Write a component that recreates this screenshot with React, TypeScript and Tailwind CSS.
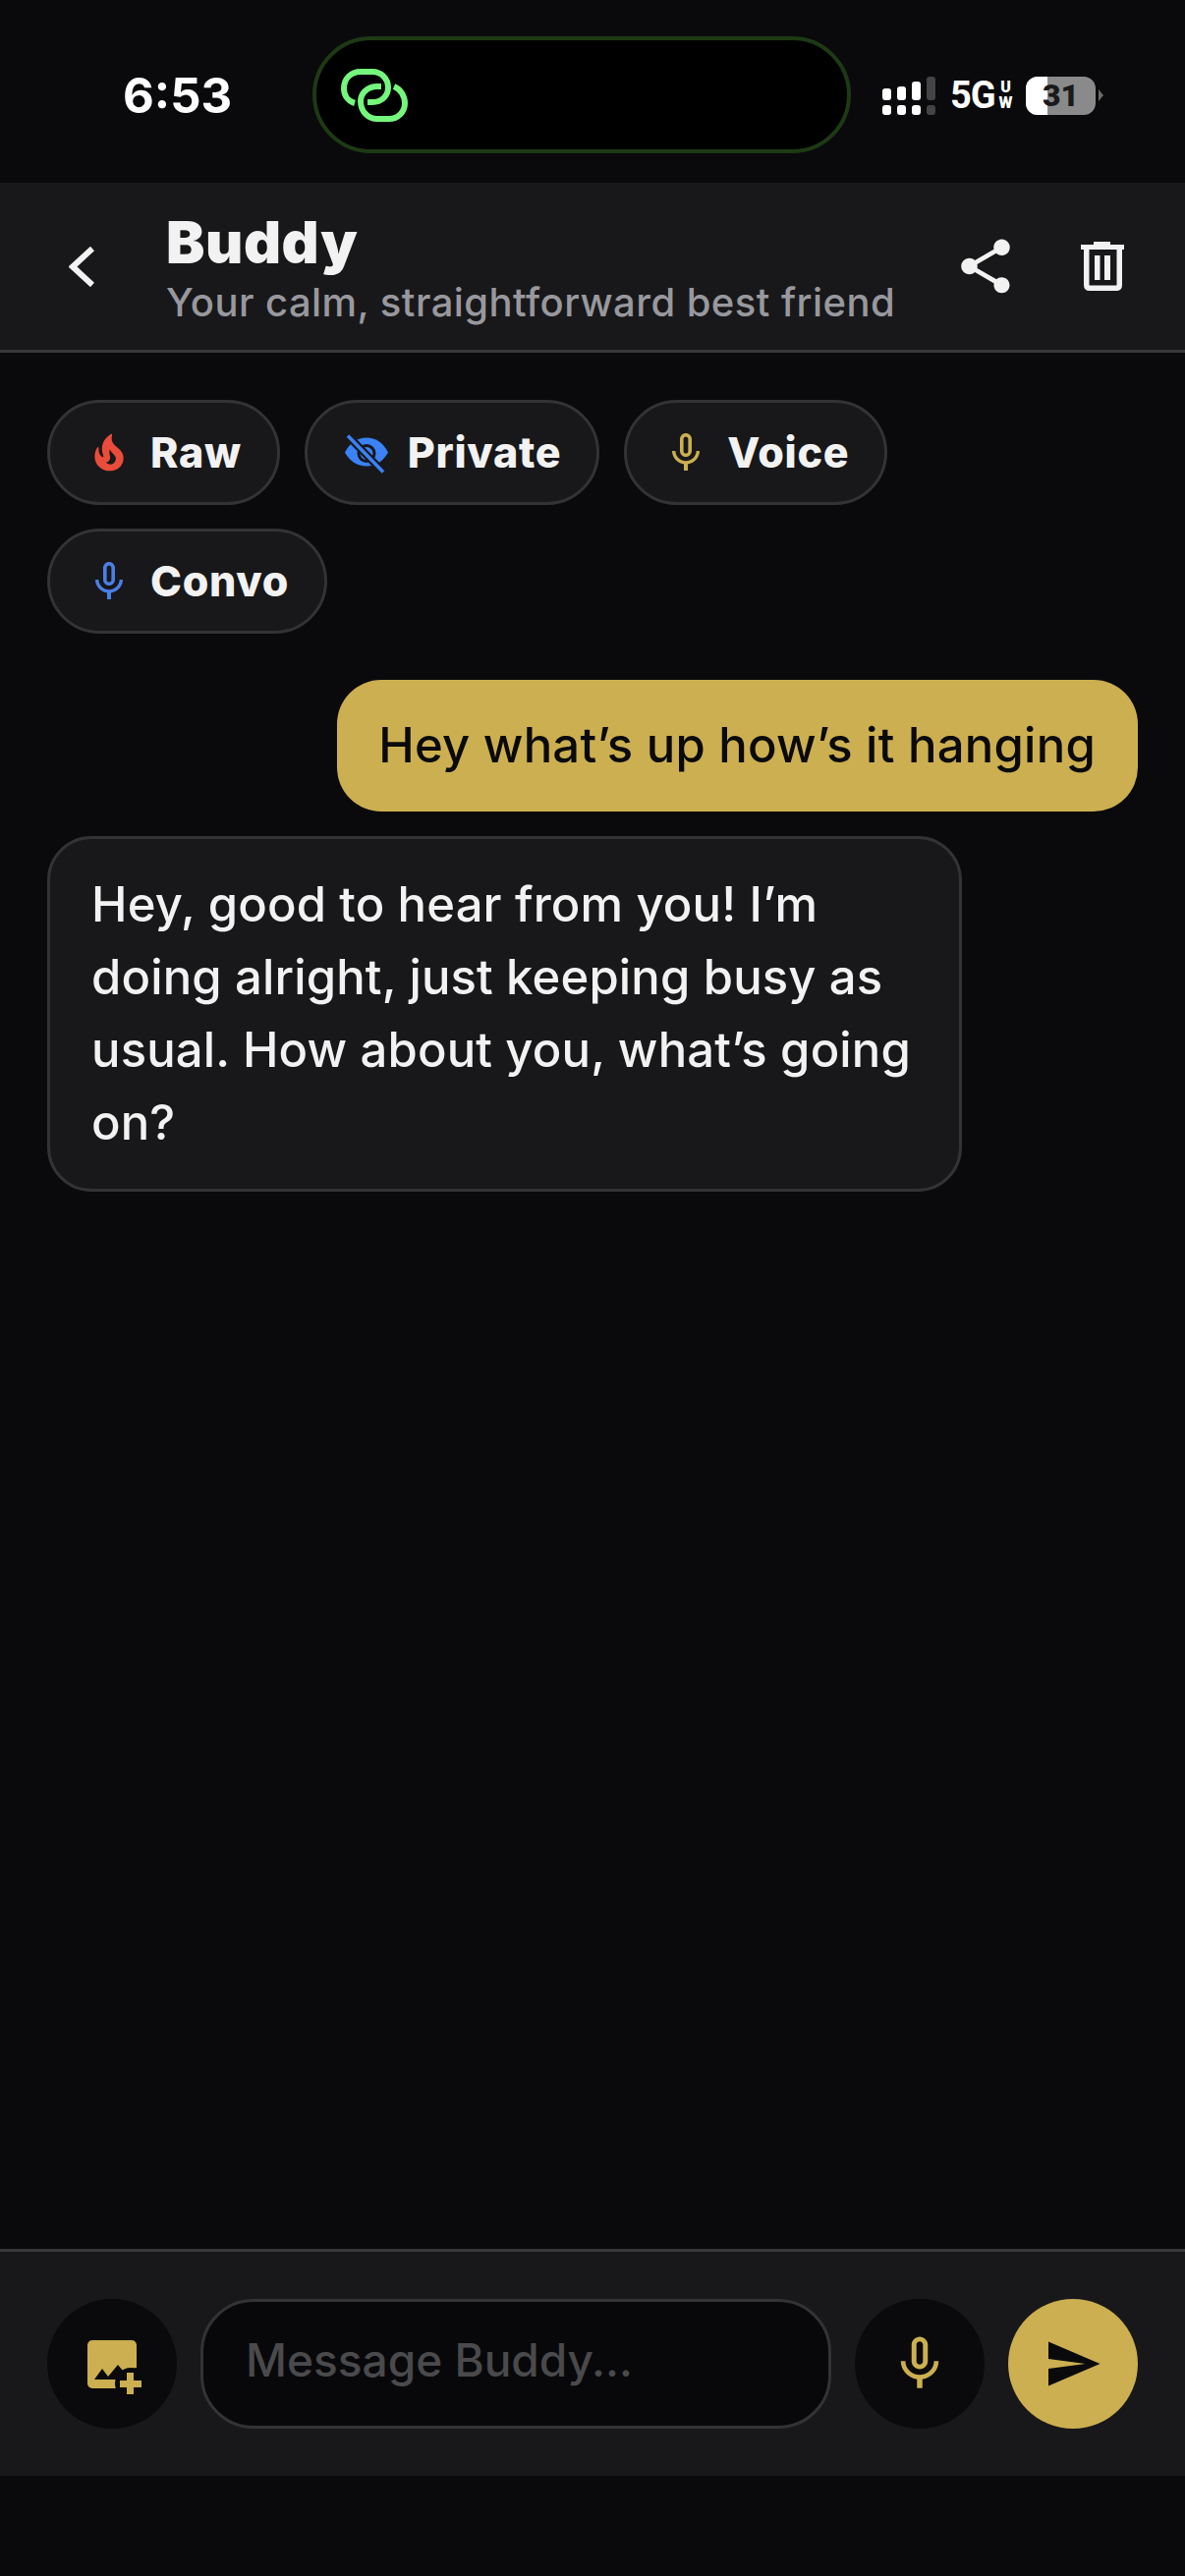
import { MdMicNone, MdSend, MdShare } from "react-icons/md";

const Bars = ({ top, dim }: { top: string; dim?: boolean }) => {
  const tone = dim ? "bg-[#444446]" : "bg-white";
  return (
    <div className="w-[9px] flex flex-col gap-[5px]">
      <div className={`${top} rounded-[3px] ${tone}`} />
      <div className={`h-[10px] rounded-[3px] ${tone}`} />
    </div>
  );
};

const StatusBar = () => {
  return (
    <div className="h-[186px] shrink-0 flex items-center pt-[8px]">
      <div className="ml-[125px] w-[193px]">
        <span className="text-[49px] leading-none font-bold text-white">6:53</span>
      </div>
      <div className="w-[548px] h-[119px] -mt-[1px] rounded-[60px] bg-black border-[4px] border-[#1d3a14] flex items-center pl-[25px]">
        <svg width="68" height="54" viewBox="0 0 68 54" fill="none" stroke="#74f77c" strokeWidth="6" strokeLinejoin="round">
          <path d="M14 35 C7 33 3 27 3 20 C3 10 10 3 20 3 L32 3 C41 3 48 10 48 19 C48 28 41 34 32 34 L27 34" />
          <path d="M41 18 L37 18 C27 18 20 25 20 33 C20 44 28 51 37 51 L49 51 C58 51 65 44 65 35 C65 28 61 21 54 18" />
        </svg>
      </div>
      <div className="ml-[32px] flex items-center">
        <div className="flex gap-[6px] items-end h-[39px]">
          <Bars top="h-[12px]" />
          <Bars top="h-[14px]" />
          <Bars top="h-[19px]" />
          <Bars top="h-[24px]" dim />
        </div>
        <div className="ml-[15px] w-[42px] font-['Roboto',sans-serif] text-[38px] leading-none font-bold text-white tracking-[-1px] whitespace-nowrap">
          5G
        </div>
        <div className="ml-[7px] w-[15px] flex flex-col items-center font-['Roboto',sans-serif] text-[16px] leading-[16px] font-black text-white">
          <span>U</span>
          <span>W</span>
        </div>
        <div className="ml-[13px] w-[71px] h-[39px] rounded-[12px] bg-[#8a8a8a] overflow-hidden relative flex items-center justify-center">
          <div className="absolute left-0 top-0 bottom-0 w-[22px] bg-white" />
          <span className="relative font-['Roboto',sans-serif] text-[32px] leading-none font-black text-[#1a1a1c]">31</span>
        </div>
        <div className="ml-[3px] w-0 h-0 border-y-[6px] border-y-transparent border-l-[5px] border-l-[#6a6a6a]" />
      </div>
    </div>
  );
};

const Header = () => {
  return (
    <header className="h-[173px] shrink-0 bg-[#18181a] border-b-[3px] border-[#38383a] flex items-center pl-[70px] pr-[62px]">
      <svg width="26" height="41" viewBox="0 0 26 41" fill="none" stroke="#f2f2f2" strokeWidth="6" className="shrink-0">
        <path d="M24 2 L4 20.5 L24 39" />
      </svg>
      <div className="ml-[73px] mt-[6px] flex-1 flex flex-col">
        <h1 className="text-[59px] leading-[62px] font-black tracking-[0.6px] text-[#f2f2f2]">Buddy</h1>
        <p className="mt-[6px] text-[40px] leading-[48px] font-medium tracking-[0.45px] text-[#98989e]">Your calm, straightforward best friend</p>
      </div>
      <MdShare className="text-[#f2f2f2] mr-[64px] shrink-0" size={66} />
      <svg width="44" height="50" viewBox="0 0 44 50" fill="none" className="shrink-0">
        <path d="M13 0 H30 V3 H44 V8 H0 V3 H13 Z" fill="#f2f2f2" />
        <path d="M5.750 8 V44 Q5.750 47.250 9 47.250 H36 Q39.250 47.250 39.250 44 V8" stroke="#f2f2f2" strokeWidth="5.500" />
        <rect x="14" y="14" width="5.500" height="25" fill="#f2f2f2" />
        <rect x="24" y="14" width="6" height="25" fill="#f2f2f2" />
      </svg>
    </header>
  );
};

const Flame = () => (
  <svg width="44" height="44" viewBox="0 0 24 24" fill="#ea4c3b" className="mx-[2px] shrink-0">
    <path d="M19.48 12.35c-1.57-4.08-7.16-4.3-5.81-10.23.1-.44-.37-.78-.75-.55C9.29 3.71 6.68 8 8.87 13.62c.18.46-.36.89-.75.59-1.81-1.37-2-3.34-1.84-4.75.06-.52-.62-.77-.91-.34C4.69 10.16 4 11.84 4 14.37c.38 5.6 5.11 7.32 6.81 7.54 2.43.31 5.06-.14 6.95-1.87 2.08-1.93 2.84-5.01 1.72-7.69zm-9.28 5.03c1.44-.35 2.18-1.39 2.38-2.31.33-1.43-.96-2.83-.09-5.09.33 1.87 3.27 3.04 3.27 5.08.08 2.53-2.66 4.7-5.56 2.32z" />
  </svg>
);

const EyeOff = () => (
  <svg width="48" height="48" viewBox="9 6.500 48 48" fill="none" className="shrink-0">
    <path d="M11 30 C16 20 24 15 33 15 C42 15 50 20 55 30 C50 39 42 44 33 44 C24 44 16 39 11 30 Z" fill="#3b82f6" />
    <circle cx="33" cy="31" r="8" stroke="#18181a" strokeWidth="3" />
    <path d="M14 13 L50 50" stroke="#18181a" strokeWidth="8" />
    <path d="M14 13 L50 50" stroke="#3b82f6" strokeWidth="3.500" />
  </svg>
);

const Chip = ({ icon, label }: { icon: React.ReactNode; label: string }) => {
  return (
    <div className="h-[107px] flex items-center gap-[18px] px-[36px] rounded-full bg-[#18181a] border-[3px] border-[#333336]">
      {icon}
      <span className="text-[43px] leading-none font-extrabold tracking-[0.7px] text-[#f2f2f2]">{label}</span>
    </div>
  );
};

const Composer = () => {
  return (
    <div className="h-[231px] shrink-0 bg-[#18181a] border-t-[3px] border-[#38383a] flex items-center gap-[24px] px-[48px]">
      <div className="w-[132px] h-[132px] rounded-full bg-[#0a0a0c] flex items-center justify-center shrink-0">
        <svg width="55" height="55" viewBox="0 0 55 55" className="ml-[5px] mt-[7px]">
          <rect x="0" y="0" width="50" height="49" rx="5" fill="#ccaf50" />
          <path d="M7 40 L15 29 L21 37 L31 25 L36 31 L50 28 V49 H30 V40 Z" fill="#0a0a0c" />
          <circle cx="44" cy="44" r="16" fill="#0a0a0c" />
          <path d="M40 33 H47 V41 H55 V48 H47 V55 H40 V48 H33 V41 H40 Z" fill="#ccaf50" />
        </svg>
      </div>
      <div className="flex-1 h-[132px] rounded-[54px] bg-[#08080a] border-[3px] border-[#333336] flex items-center pl-[43px]">
        <span className="text-[46px] leading-none font-medium text-[#4a4a4c] -mt-[8px]">Message Buddy...</span>
      </div>
      <div className="w-[132px] h-[132px] rounded-full bg-[#0a0a0c] flex items-center justify-center shrink-0">
        <MdMicNone className="text-[#ccaf50]" size={66} />
      </div>
      <div className="w-[132px] h-[132px] rounded-full bg-[#ccaf50] flex items-center justify-center shrink-0">
        <MdSend className="text-[#0a0a0c]" size={60} />
      </div>
    </div>
  );
};

export default function App() {
  return (
    <div className="font-['Inter','Noto_Sans',sans-serif] w-[1206px] h-[2622px] bg-[#0a0a0c] flex flex-col overflow-hidden">
      <StatusBar />
      <Header />
      <main className="flex-1 flex flex-col px-[48px] pt-[48px]">
        <div className="flex flex-wrap gap-x-[25px] gap-y-[24px] w-[900px]">
          <Chip icon={<Flame />} label="Raw" />
          <Chip icon={<EyeOff />} label="Private" />
          <Chip icon={<MdMicNone className="text-[#ccaf50]" size={48} />} label="Voice" />
          <Chip icon={<MdMicNone className="text-[#4a7fe8]" size={48} />} label="Convo" />
        </div>
        <div className="mt-[47px] self-end bg-[#ccaf50] rounded-[45px] pl-[42px] pr-[43px] h-[134px] flex items-center">
          <span className="text-[49px] font-medium tracking-[0.25px] text-[#0a0a0c]">Hey what’s up how’s it hanging</span>
        </div>
        <div className="mt-[25px] w-[931px] h-[362px] bg-[#18181a] border-[3px] border-[#333336] rounded-[45px] px-[42px] py-[32px]">
          <p className="text-[49px] leading-[74px] font-medium tracking-[0.15px] text-[#f2f2f2] -mt-[2px]">
            Hey, good to hear from you! I’m doing alright, just keeping busy as usual. How about you, what’s going on?
          </p>
        </div>
      </main>
      <Composer />
      <div className="h-[102px] shrink-0" />
    </div>
  );
}
